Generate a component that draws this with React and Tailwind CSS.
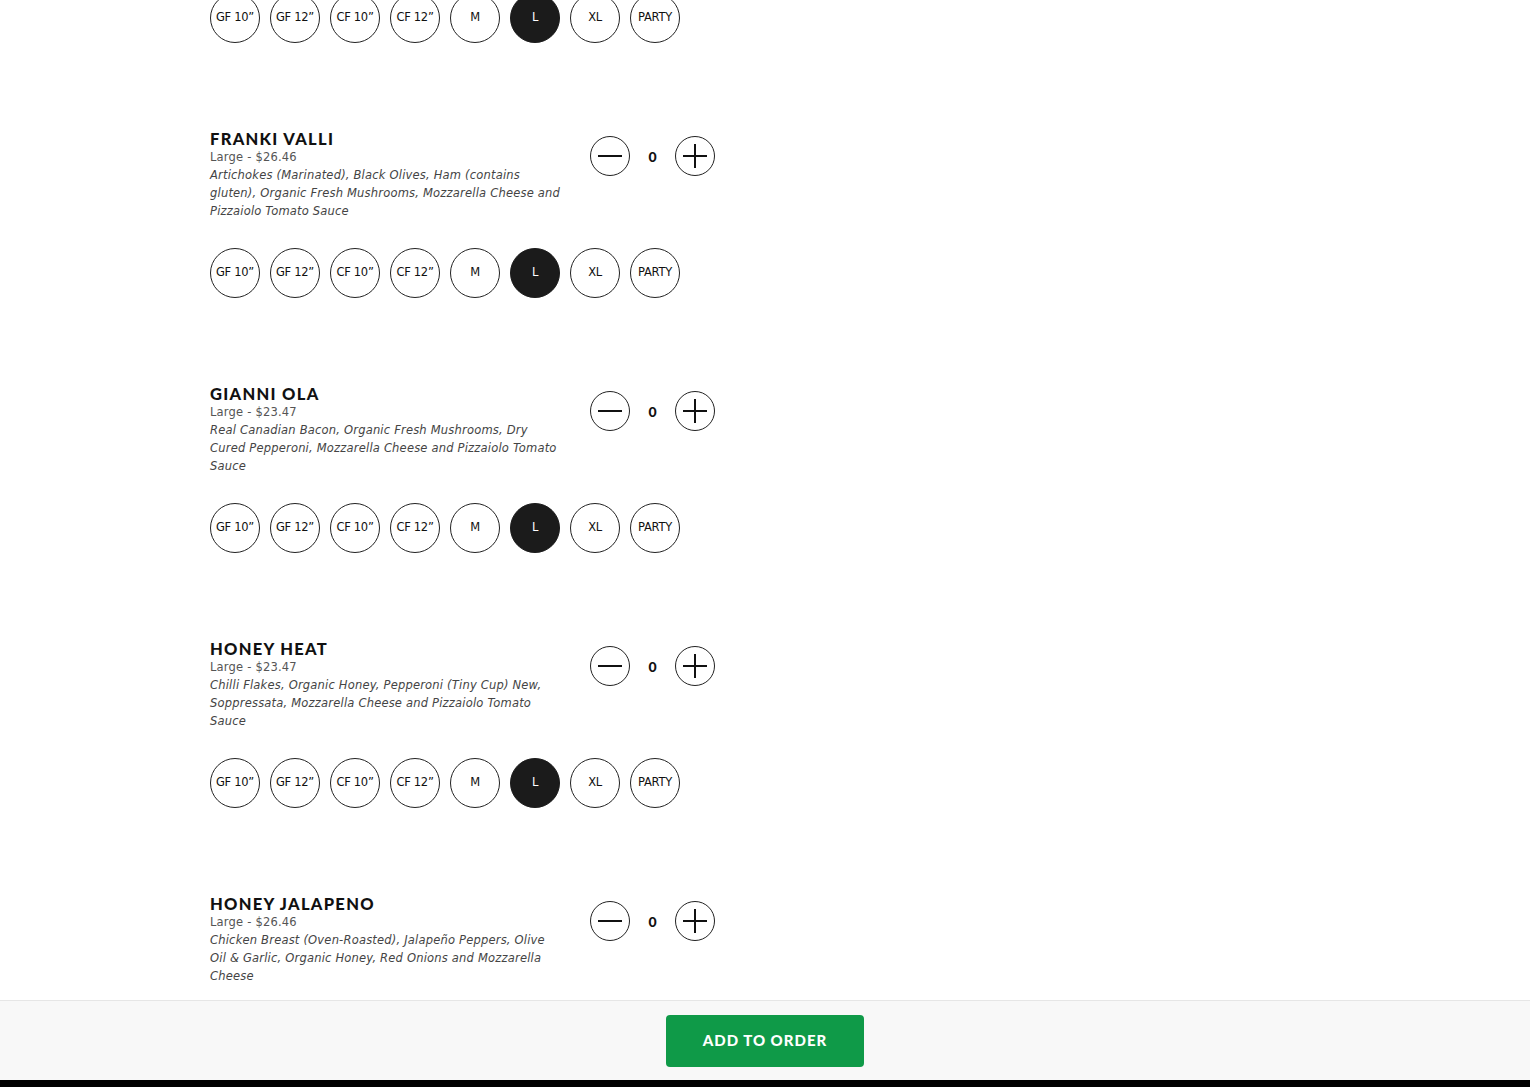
import React from "react";

const items = [
  {
    name: "CALABRESE",
    price: "Large - $24.97",
    lines: ["Spicy Calabrese Salami, Roasted Red Peppers, Red", "Onions, Organic Fresh Mushrooms, Mozzarella Cheese", "and Pizzaiolo Tomato Sauce"],
  },
  {
    name: "FRANKI VALLI",
    price: "Large - $26.46",
    lines: ["Artichokes (Marinated), Black Olives, Ham (contains", "gluten), Organic Fresh Mushrooms, Mozzarella Cheese and", "Pizzaiolo Tomato Sauce"],
  },
  {
    name: "GIANNI OLA",
    price: "Large - $23.47",
    lines: ["Real Canadian Bacon, Organic Fresh Mushrooms, Dry", "Cured Pepperoni, Mozzarella Cheese and Pizzaiolo Tomato", "Sauce"],
  },
  {
    name: "HONEY HEAT",
    price: "Large - $23.47",
    lines: ["Chilli Flakes, Organic Honey, Pepperoni (Tiny Cup) New,", "Soppressata, Mozzarella Cheese and Pizzaiolo Tomato", "Sauce"],
  },
  {
    name: "HONEY JALAPENO",
    price: "Large - $26.46",
    lines: ["Chicken Breast (Oven-Roasted), Jalapeño Peppers, Olive", "Oil & Garlic, Organic Honey, Red Onions and Mozzarella", "Cheese"],
  },
];

const sizes = ["GF 10\u201D", "GF 12\u201D", "CF 10\u201D", "CF 12\u201D", "M", "L", "XL", "PARTY"];

function Stepper() {
  return (
    <div className="mt-[6px] flex items-center self-start">
      <button className="flex h-[40px] w-[40px] items-center justify-center rounded-full border border-[#222] bg-white">
        <svg width="26" height="26" viewBox="0 0 26 26">
          <path d="M1 13H25" stroke="#111" strokeWidth="2" />
        </svg>
      </button>
      <div className="w-[45px] text-center font-['Lato',sans-serif] text-[14px] font-black text-[#111]">0</div>
      <button className="flex h-[40px] w-[40px] items-center justify-center rounded-full border border-[#222] bg-white">
        <svg width="26" height="26" viewBox="0 0 26 26">
          <path d="M1 13H25M13 1V25" stroke="#111" strokeWidth="2" />
        </svg>
      </button>
    </div>
  );
}

function Item({ item }) {
  return (
    <div className="pb-[87px]">
      <div className="flex gap-[30px]">
        <div className="w-[350px]">
          <div className="font-['Lato',sans-serif] text-[16.5px] leading-[18px] font-black tracking-[1.3px] text-[#111]">
            {item.name}
          </div>
          <div className="text-[11.5px] leading-[18px] tracking-[0.2px] text-[#555]">{item.price}</div>
          <div className="text-[11.5px] leading-[18px] italic tracking-[0.2px] text-[#444]">
            {item.lines.map((l, i) => (
              <div key={i} className="whitespace-nowrap">
                {l}
              </div>
            ))}
          </div>
        </div>
        <Stepper />
      </div>
      <div className="mt-[28px] flex gap-[10px]">
        {sizes.map((s) => {
          const active = s === "L";
          return (
            <div
              key={s}
              className={
                active
                  ? "flex h-[50px] w-[50px] items-center justify-center rounded-full border border-[#1b1b1b] bg-[#1b1b1b] text-[11.5px] tracking-[-0.3px] text-white"
                  : "flex h-[50px] w-[50px] items-center justify-center rounded-full border border-[#222] bg-white text-[11.5px] tracking-[-0.3px] text-[#111]"
              }
            >
              {s}
            </div>
          );
        })}
      </div>
    </div>
  );
}

export default function App() {
  return (
    <div className="relative h-[1087px] overflow-hidden bg-white font-['DejaVu_Sans',sans-serif]">
      <div className="-mt-[125px] pl-[210px]">
        {items.map((it) => (
          <Item key={it.name} item={it} />
        ))}
      </div>
      <div className="absolute bottom-0 left-0 right-0">
        <div className="flex h-[80px] items-center justify-center border-t border-[#e6e6e6] bg-[#f8f8f8]">
          <button className="h-[52px] w-[198px] rounded-[4px] bg-[#0f9a48] font-['Lato',sans-serif] text-[15px] font-black tracking-[1px] text-white">
            ADD TO ORDER
          </button>
        </div>
        <div className="h-[7px] bg-black" />
      </div>
    </div>
  );
}
